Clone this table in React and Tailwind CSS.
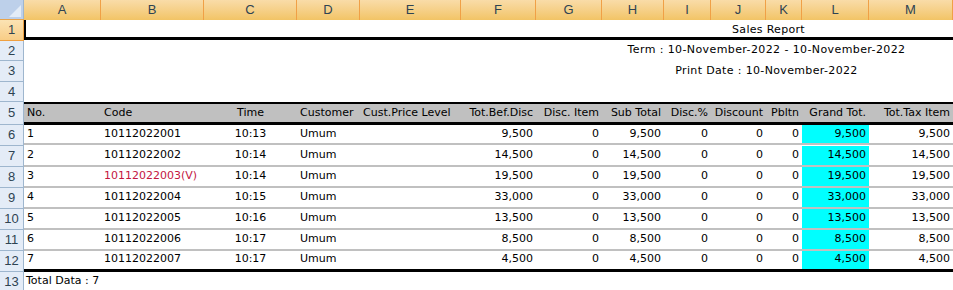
import React from "react";

const COLS = ["A", "B", "C", "D", "E", "F", "G", "H", "I", "J", "K", "L", "M"];
const GRID =
  "grid grid-cols-[77px_103px_93px_63px_101px_75px_66px_62px_47px_55px_36px_67px_84px]";

const HEADERS = [
  "No.",
  "Code",
  "Time",
  "Customer",
  "Cust.Price Level",
  "Tot.Bef.Disc",
  "Disc. Item",
  "Sub Total",
  "Disc.%",
  "Discount",
  "Pbltn",
  "Grand Tot.",
  "Tot.Tax Item",
];

const DATA = [
  ["1", "10112022001", "10:13", "9,500"],
  ["2", "10112022002", "10:14", "14,500"],
  ["3", "10112022003(V)", "10:14", "19,500", true],
  ["4", "10112022004", "10:15", "33,000"],
  ["5", "10112022005", "10:16", "13,500"],
  ["6", "10112022006", "10:17", "8,500"],
  ["7", "10112022007", "10:17", "4,500"],
];

/* row header + content */
const Row = ({ n, active, className = "", children }) => (
  <div className="flex">
    <div
      className={`w-[24px] shrink-0 flex items-center justify-center border-r border-b text-[13px] text-[#2e4352] font-['Liberation_Sans',sans-serif] ${
        active
          ? "bg-gradient-to-b from-[#fbe3b4] to-[#f8cd86] border-[#f0a040]"
          : "bg-[#e4ecf7] border-[#9eb6ce]"
      }`}
    >
      {n}
    </div>
    <div className={`flex-1 ${className}`}>{children}</div>
  </div>
);

const Cell = ({ align = "left", className = "", children }) => {
  const justify = {
    left: "justify-start",
    right: "justify-end",
    center: "justify-center",
  }[align];
  return (
    <div
      className={`flex items-center px-[3px] whitespace-nowrap overflow-visible ${justify} ${className}`}
    >
      {children}
    </div>
  );
};

export default function App() {
  return (
    <div className="w-[953px] h-[290px] overflow-hidden bg-white text-[11px] text-black font-['DejaVu_Sans',sans-serif]">
      {/* column letters */}
      <div className="flex h-[20px] border-b border-[#e8a34a]">
        <div className="w-[24px] shrink-0 relative bg-[#bdd0ea] border-r border-[#9eb6ce]">
          <div className="absolute right-[2px] bottom-[2px] w-0 h-0 border-l-[12px] border-l-transparent border-b-[12px] border-b-[#e3ecf7]" />
        </div>
        <div className={`${GRID} flex-1`}>
          {COLS.map((c) => (
            <div
              key={c}
              className="flex items-center justify-center border-r border-[#f0a046] bg-gradient-to-b from-[#f9dca8] to-[#f2c465] text-[13px] text-[#2e4352] font-['Liberation_Sans',sans-serif]"
            >
              {c}
            </div>
          ))}
        </div>
      </div>

      {/* title rows */}
      <Row n="1" active className="h-[20px] border-l-2 border-b-[3px] border-black">
        <div className={`${GRID} h-full pt-[2px] tracking-[0.3px]`}>
          <Cell align="center" className="col-start-9 col-span-4">
            Sales Report
          </Cell>
        </div>
      </Row>
      <Row n="2" className="h-[20px]">
        <div className={`${GRID} h-full tracking-[0.4px]`}>
          <Cell align="center" className="col-start-9 col-span-4">
            Term : 10-November-2022 - 10-November-2022
          </Cell>
        </div>
      </Row>
      <Row n="3" className="h-[20px]">
        <div className={`${GRID} h-full tracking-[0.35px]`}>
          <Cell align="center" className="col-start-9 col-span-4">
            Print Date : 10-November-2022
          </Cell>
        </div>
      </Row>
      <Row n="4" className="h-[19px]" />

      {/* table header */}
      <Row n="5" className="h-[23px] border-t-2 border-b-[3px] border-black bg-[#c0c0c0]">
        <div className={`${GRID} h-full`}>
          {HEADERS.map((h, i) => (
            <Cell key={h} align={i === 2 ? "center" : i > 4 ? "right" : "left"}>
              {h}
            </Cell>
          ))}
        </div>
      </Row>

      {/* data rows */}
      {DATA.map(([no, code, time, amt, voided], i) => {
        const last = i === DATA.length - 1;
        return (
          <Row
            key={no}
            n={String(i + 6)}
            className={`${i === 0 ? "h-[20px]" : "h-[21px]"} ${
              last ? "border-b-[3px] border-black" : "border-b-2 border-[#c0c0c0]"
            }`}
          >
            <div className={`${GRID} h-full`}>
              <Cell>{no}</Cell>
              <Cell className={voided ? "text-[#c4163f]" : ""}>{code}</Cell>
              <Cell align="center">{time}</Cell>
              <Cell>Umum</Cell>
              <Cell />
              <Cell align="right">{amt}</Cell>
              <Cell align="right">0</Cell>
              <Cell align="right">{amt}</Cell>
              <Cell align="right">0</Cell>
              <Cell align="right">0</Cell>
              <Cell align="right">0</Cell>
              <Cell align="right" className="bg-[#00ffff]">
                {amt}
              </Cell>
              <Cell align="right">{amt}</Cell>
            </div>
          </Row>
        );
      })}

      <Row n="13" className="h-[20px]">
        <div className="flex h-full items-center px-[2px]">Total Data : 7</div>
      </Row>
      <Row n="" className="h-[20px]" />
    </div>
  );
}
